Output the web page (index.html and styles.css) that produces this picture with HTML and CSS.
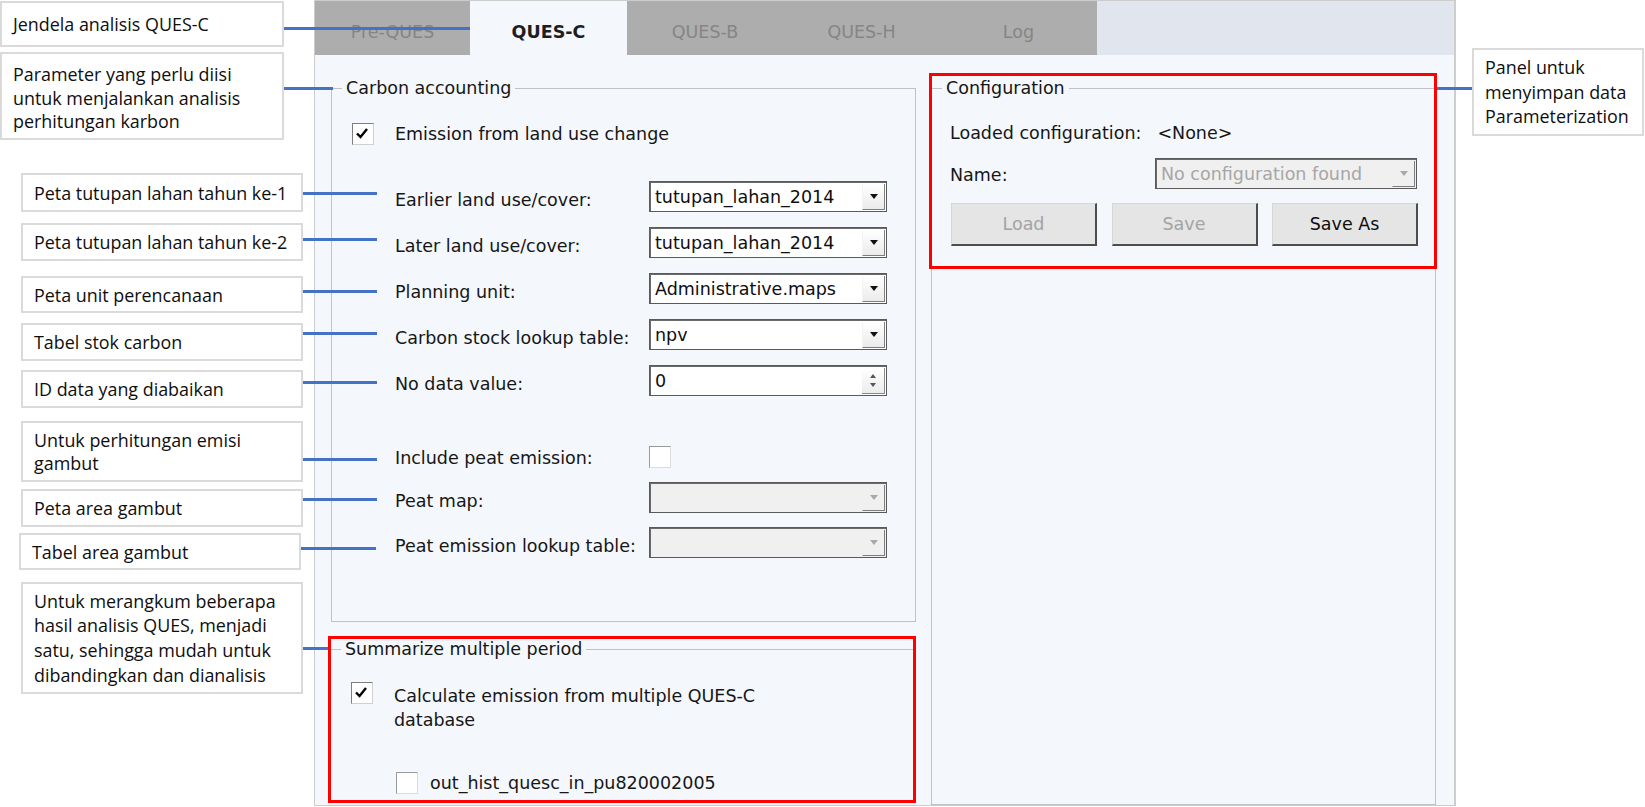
FILE: index.html
```html
<!DOCTYPE html>
<html>
<head>
<meta charset="utf-8">
<link rel="stylesheet" href="styles.css">
</head>
<body>
<div class="canvas">
  <div class="notes-left">
    <div class="note-row n1"><div class="note">Jendela analisis QUES-C</div><span class="link"></span></div>
    <div class="note-row n2"><div class="note">Parameter yang perlu diisi<br>untuk menjalankan analisis<br>perhitungan karbon</div><span class="link"></span></div>
    <div class="note-row n3"><div class="note">Peta tutupan lahan tahun ke-1</div><span class="link"></span></div>
    <div class="note-row n4"><div class="note">Peta tutupan lahan tahun ke-2</div><span class="link"></span></div>
    <div class="note-row n5"><div class="note">Peta unit perencanaan</div><span class="link"></span></div>
    <div class="note-row n6"><div class="note">Tabel stok carbon</div><span class="link"></span></div>
    <div class="note-row n7"><div class="note">ID data yang diabaikan</div><span class="link"></span></div>
    <div class="note-row n8"><div class="note">Untuk perhitungan emisi<br>gambut</div><span class="link"></span></div>
    <div class="note-row n9"><div class="note">Peta area gambut</div><span class="link"></span></div>
    <div class="note-row n10"><div class="note">Tabel area gambut</div><span class="link"></span></div>
    <div class="note-row n11"><div class="note">Untuk merangkum beberapa<br>hasil analisis QUES, menjadi<br>satu, sehingga mudah untuk<br>dibandingkan dan dianalisis</div><span class="link"></span></div>
  </div>

  <div class="window">
    <div class="tabs">
      <div class="tab t1">Pre-QUES</div>
      <div class="tab t2 active">QUES-C</div>
      <div class="tab t3">QUES-B</div>
      <div class="tab t4">QUES-H</div>
      <div class="tab t5">Log</div>
    </div>
    <div class="body">
      <div class="col-left">
        <fieldset class="group carbon">
          <legend>Carbon accounting</legend>
          <div class="check-row emission">
            <span class="cb"><svg viewBox="0 0 20 20"><polyline points="4,9.5 7.5,13 14,5" fill="none" stroke="#000" stroke-width="2.4"/></svg></span>
            <span class="cb-text">Emission from land use change</span>
          </div>
          <div class="form">
            <div class="row r-first"><span class="lbl">Earlier land use/cover:</span><div class="combo"><span class="val">tutupan_lahan_2014</span><span class="arrow"><i class="tri"></i></span></div></div>
            <div class="row r-gap"><span class="lbl">Later land use/cover:</span><div class="combo"><span class="val">tutupan_lahan_2014</span><span class="arrow"><i class="tri"></i></span></div></div>
            <div class="row r-gap"><span class="lbl">Planning unit:</span><div class="combo"><span class="val">Administrative.maps</span><span class="arrow"><i class="tri"></i></span></div></div>
            <div class="row r-gap"><span class="lbl">Carbon stock lookup table:</span><div class="combo"><span class="val">npv</span><span class="arrow"><i class="tri"></i></span></div></div>
            <div class="row r-gap"><span class="lbl">No data value:</span><div class="combo"><span class="val">0</span><span class="spinbtns"><i class="up"></i><i class="down"></i></span></div></div>
            <div class="row r-include"><span class="lbl">Include peat emission:</span><span class="cb empty"></span></div>
            <div class="row r-gap2"><span class="lbl">Peat map:</span><div class="combo disabled"><span class="val"></span><span class="arrow"><i class="tri"></i></span></div></div>
            <div class="row r-gap2"><span class="lbl">Peat emission lookup table:</span><div class="combo disabled"><span class="val"></span><span class="arrow"><i class="tri"></i></span></div></div>
          </div>
        </fieldset>
        <div class="redbox summ-red">
          <fieldset class="group summarize">
            <legend>Summarize multiple period</legend>
            <div class="check-row multi">
              <span class="cb"><svg viewBox="0 0 20 20"><polyline points="4,9.5 7.5,13 14,5" fill="none" stroke="#000" stroke-width="2.4"/></svg></span>
              <span class="cb-text two">Calculate emission from multiple QUES-C<br>database</span>
            </div>
            <div class="check-row dbitem">
              <span class="cb empty"></span>
              <span class="cb-text">out_hist_quesc_in_pu820002005</span>
            </div>
          </fieldset>
        </div>
      </div>
      <div class="col-right">
        <fieldset class="group config">
          <legend>Configuration</legend>
          <div class="loaded"><span>Loaded configuration:</span><span class="none">&lt;None&gt;</span></div>
          <div class="name-row"><span class="name-lbl">Name:</span><div class="combo disabled wide"><span class="val">No configuration found</span><span class="arrow"><i class="tri"></i></span></div></div>
          <div class="buttons">
            <div class="btn">Load</div>
            <div class="btn">Save</div>
            <div class="btn enabled">Save As</div>
          </div>
        </fieldset>
        <div class="redbox config-red"></div>
      </div>
    </div>
  </div>

  <div class="notes-right">
    <div class="note-row n12"><span class="link"></span><div class="note">Panel untuk<br>menyimpan data<br>Parameterization</div></div>
  </div>
</div>
</body>
</html>
```

FILE: styles.css
```css
* { box-sizing: border-box; }
html, body { margin: 0; padding: 0; background: #ffffff; }
body { width: 1645px; height: 807px; overflow: hidden; }

.canvas { display: flex; align-items: flex-start; width: 1645px; height: 807px; }

/* annotation callouts */
.notes-left { width: 314px; flex: none; display: flex; flex-direction: column; position: relative; z-index: 2; }
.notes-right { width: 189px; flex: none; display: flex; flex-direction: column; position: relative; z-index: 2; }
.note-row { display: flex; align-items: flex-start; flex: none; }
.note {
  flex: none;
  background: #ffffff;
  border: 2px solid #dadada;
  font-family: "Open Sans", "Noto Sans", sans-serif;
  font-size: 17.9px;
  line-height: 24px;
  color: #0e0e0e;
  display: flex;
  flex-direction: column;
  justify-content: center;
  padding-left: 11px;
  white-space: nowrap;
}
.link { flex: none; height: 3px; background: #4472c4; }

.n1 { margin-top: 1px; }
.n1 .note { width: 284px; height: 46px; }
.n1 .link { width: 186px; margin-top: 26px; }

.n2 { margin-top: 5px; }
.n2 .note { width: 284px; height: 88px; line-height: 23.5px; padding-top: 5px; }
.n2 .link { width: 49px; margin-top: 35px; }

.n3, .n4, .n5, .n6, .n7, .n8, .n9, .n10, .n11 { margin-left: 21px; }
.n3 .note, .n4 .note, .n5 .note, .n6 .note, .n7 .note, .n8 .note, .n9 .note, .n10 .note, .n11 .note { width: 282px; }
.n3 .link, .n4 .link, .n5 .link, .n6 .link, .n7 .link, .n8 .link, .n9 .link, .n10 .link { width: 74px; }

.n3 { margin-top: 33px; }
.n3 .note { height: 39px; }
.n3 .link { margin-top: 19px; }
.n4 { margin-top: 11px; }
.n4 .note { height: 38px; }
.n4 .link { margin-top: 15px; }
.n5 { margin-top: 15px; }
.n5 .note { height: 37px; }
.n5 .link { margin-top: 14px; }
.n6 { margin-top: 10px; }
.n6 .note { height: 38px; }
.n6 .link { margin-top: 9px; }
.n7 { margin-top: 9px; }
.n7 .note { height: 38px; }
.n7 .link { margin-top: 11px; }
.n8 { margin-top: 13px; }
.n8 .note { height: 61px; line-height: 23px; }
.n8 .link { margin-top: 37px; }
.n9 { margin-top: 7px; }
.n9 .note { height: 38px; }
.n9 .link { margin-top: 9px; }
.n10 { margin-top: 6px; margin-left: 19px; }
.n10 .note { height: 37px; }
.n10 .link { margin-top: 14px; width: 75px; }
.n11 { margin-top: 12px; }
.n11 .note { height: 112px; line-height: 24.6px; }
.n11 .link { width: 25px; margin-top: 65px; }

.n12 { margin-top: 48px; }
.n12 .link { width: 35px; margin-left: -19px; margin-top: 39px; }
.n12 .note { width: 172px; height: 88px; line-height: 24.5px; }

/* application window */
.window {
  flex: none;
  width: 1142px;
  height: 806px;
  border: 1px solid #cccccc;
  border-right: 2px solid #cdcdcd;
  background: #f4f7fb;
  display: flex;
  flex-direction: column;
  overflow: hidden;
  font-family: "DejaVu Sans", "Liberation Sans", sans-serif;
  font-size: 17.5px;
  color: #161616;
}

.tabs { flex: none; height: 54px; display: flex; background: #e1e5ee; }
.tab {
  flex: none;
  height: 54px;
  display: flex;
  align-items: center;
  justify-content: center;
  padding-top: 7px;
  background: #adadad;
  color: #858585;
  white-space: nowrap;
}
.tab.active { background: #f4f7fb; color: #1e1e1e; font-weight: bold; }
.t1 { width: 155px; }
.t2 { width: 157px; }
.t3 { width: 156px; }
.t4 { width: 157px; }
.t5 { width: 157px; }

.body {
  flex: 1;
  display: grid;
  grid-template-columns: 585px 505px;
  column-gap: 15px;
  align-items: start;
  padding: 23px 0 0 16px;
}

.group {
  margin: 0;
  padding: 0;
  border: 1px solid #c2c2c2;
  min-width: 0;
}
.group legend {
  margin-left: 10px;
  padding: 0 4px;
  line-height: 20px;
  color: #161616;
}

.col-left { display: flex; flex-direction: column; }
.col-right { position: relative; }

.carbon { height: 544px; }

.check-row { display: flex; align-items: center; }
.cb {
  flex: none;
  width: 22px;
  height: 22px;
  background: #ffffff;
  border: 1px solid;
  border-color: #7e7e7e #d0d0d0 #d0d0d0 #7e7e7e;
  display: flex;
}
.cb svg { width: 20px; height: 20px; }
.cb-text { white-space: nowrap; line-height: 20px; }

.emission { margin: 25px 0 0 20px; }
.emission .cb-text { margin-left: 21px; }

.form { margin-left: 63px; display: flex; flex-direction: column; }
.row { display: flex; align-items: center; height: 31px; }
.lbl { flex: none; width: 254px; white-space: nowrap; margin-top: 6px; }
.r-first { margin-top: 36px; }
.r-gap { margin-top: 15px; }
.r-include { margin-top: 50px; height: 22px; }
.r-include .lbl { margin-top: 2px; }
.r-gap2 { margin-top: 14px; }

.combo {
  flex: none;
  width: 238px;
  height: 31px;
  display: flex;
  background: #ffffff;
  border: 1px solid #5a5a5a;
  box-shadow: inset 1px 1px 0 #6a6a6a;
}
.combo .val {
  flex: 1;
  display: flex;
  align-items: center;
  padding-left: 5px;
  padding-top: 1px;
  white-space: nowrap;
  overflow: hidden;
  color: #0e0e0e;
}
.combo .arrow {
  flex: none;
  width: 23px;
  margin: 2px 1px 1px 0;
  background: linear-gradient(#ffffff, #ebebeb);
  border-left: 1px solid #f4f4f4;
  border-right: 1px solid #7e7e7e;
  border-bottom: 1px solid #7e7e7e;
  display: flex;
  align-items: center;
  justify-content: center;
}
.tri {
  width: 0;
  height: 0;
  border-left: 4.5px solid transparent;
  border-right: 4.5px solid transparent;
  border-top: 5px solid #111111;
}
.combo.disabled { background: #f0f0f0; }
.combo.disabled .val { color: #a6a6a6; }
.combo.disabled .arrow { background: #f0f0f0; border-left-color: #f0f0f0; }
.combo.disabled .tri { border-top-color: #a9a9a9; }

.spinbtns {
  flex: none;
  width: 23px;
  margin: 2px 1px 1px 0;
  display: flex;
  flex-direction: column;
  align-items: center;
  justify-content: space-evenly;
  background: linear-gradient(#ffffff, #ececec);
  border-right: 1px solid #8a8a8a;
  border-bottom: 1px solid #8a8a8a;
}
.spinbtns .up { width: 0; height: 0; border-left: 3.5px solid transparent; border-right: 3.5px solid transparent; border-bottom: 4px solid #555555; }
.spinbtns .down { width: 0; height: 0; border-left: 3.5px solid transparent; border-right: 3.5px solid transparent; border-top: 4px solid #555555; }

.cb.empty { border-color: #9a9a9a #dcdcdc #dcdcdc #9a9a9a; }

/* summarize group with red highlight */
.redbox { border: 3px solid #ff0000; }
.summ-red { margin: 14px 0 0 -3px; width: 588px; height: 167px; }
.summarize { border-width: 1px 0 0 0; height: 170px; }
.multi { margin: 23px 0 0 20px; align-items: flex-start; }
.multi .cb-text { margin: 2px 0 0 21px; line-height: 24px; }
.dbitem { margin: 40px 0 0 65px; }
.dbitem .cb-text { margin-left: 12px; line-height: 22px; }

/* configuration group */
.config { height: 727px; }
.loaded { margin: 25px 0 0 18px; line-height: 20px; display: flex; white-space: nowrap; }
.loaded .none { margin-left: 16px; }
.name-row { margin: 15px 0 0 18px; display: flex; align-items: center; }
.name-lbl { flex: none; width: 205px; margin-top: 3px; }
.combo.wide { width: 262px; }
.buttons { margin: 14px 0 0 19px; display: flex; column-gap: 14.5px; }
.btn {
  flex: none;
  width: 146px;
  height: 43px;
  background: #e5e5e5;
  border: 1px solid #d6d6d6;
  border-right: 2px solid #4d4d4d;
  border-bottom: 2px solid #4d4d4d;
  display: flex;
  align-items: center;
  justify-content: center;
  color: #a3a3a3;
}
.btn.enabled { color: #0e0e0e; }

.config-red { position: absolute; left: -2px; top: -5px; width: 508px; height: 196px; }
```
